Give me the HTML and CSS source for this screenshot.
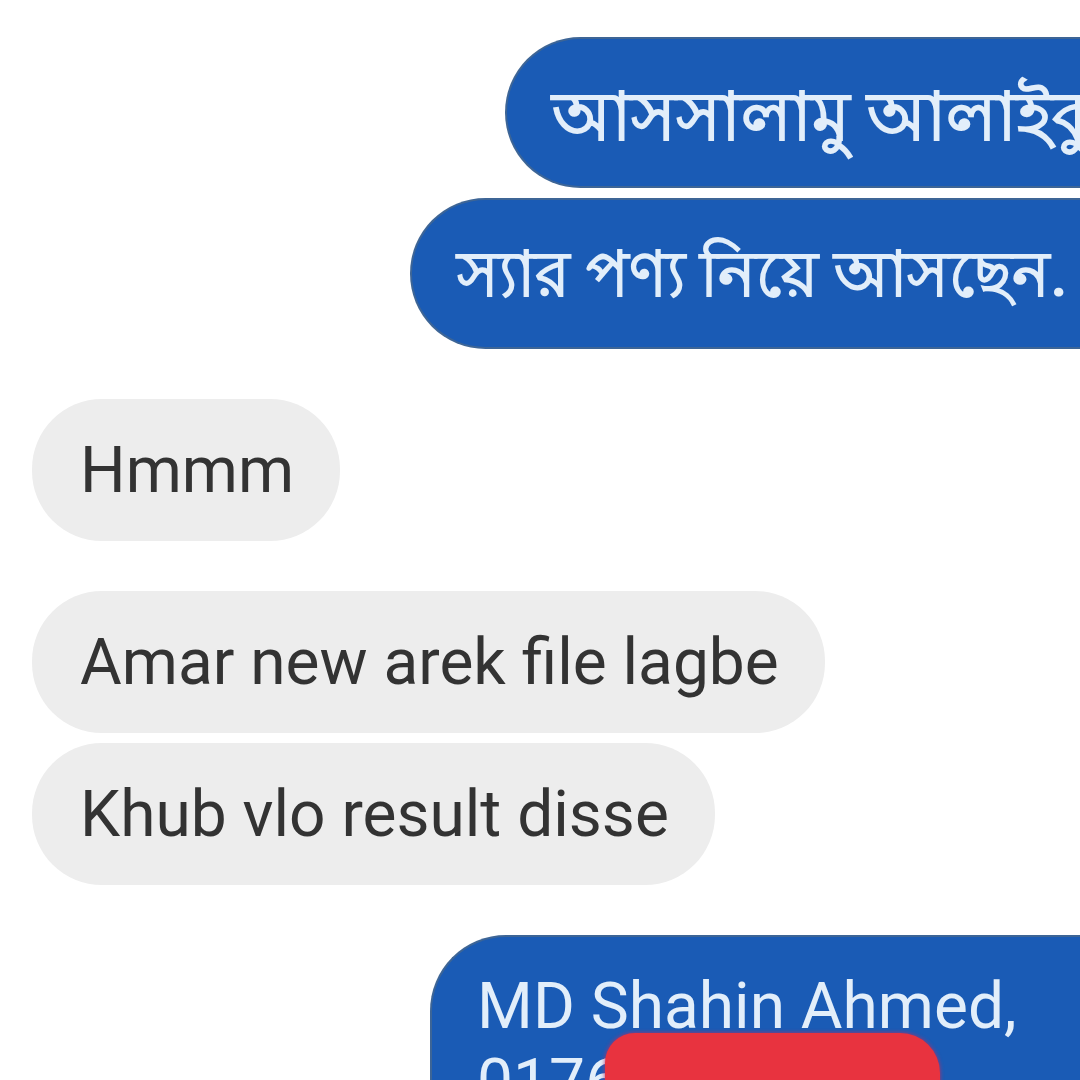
FILE: index.html
```html
<!DOCTYPE html>
<html lang="bn">
<head>
    <meta charset="UTF-8">
    <meta name="viewport" content="width=device-width, initial-scale=1.0">
    <title>Chat</title>
    <link rel="stylesheet" href="styles.css">
</head>
<body>
    <main class="chat">
        <div class="row sent">
            <div class="bubble out salam">আসসালামু আলাইকুম</div>
        </div>
        <div class="row sent tight">
            <div class="bubble out product">স্যার পণ্য নিয়ে আসছেন.</div>
        </div>

        <div class="row received gap">
            <div class="bubble in">Hmmm</div>
        </div>
        <div class="row received gap">
            <div class="bubble in">Amar new arek file lagbe</div>
        </div>
        <div class="row received tight">
            <div class="bubble in">Khub vlo result disse</div>
        </div>

        <div class="row sent gap">
            <div class="bubble out contact">
                <span class="line">MD Shahin Ahmed,</span>
                <span class="line phone">0176<span class="scribble"></span></span>
            </div>
        </div>
    </main>
</body>
</html>
```

FILE: styles.css
```css
/* styles.css */

body {
    margin: 0;
    padding: 0;
    background-color: #fff;
    font-family: Roboto, "Noto Sans", sans-serif;
    overflow: hidden;
}

.chat {
    width: 1080px;
    height: 1080px;
    overflow: hidden;
    padding-top: 37px;
    box-sizing: border-box;
}

.row {
    display: flex;
}

.row.gap {
    margin-top: 50px;
}

.row.tight {
    margin-top: 10px;
}

.bubble {
    white-space: nowrap;
    box-sizing: border-box;
}

/* outgoing, blue, runs off the right edge */
.bubble.out {
    flex: 1;
    overflow: hidden;
    background-color: #1a5bb5;
    color: #e2eefa;
    border: 2px solid #3d6596;
    border-right: none;
    border-radius: 76px 0 0 76px;
    height: 151px;
    display: flex;
    align-items: center;
    padding-left: 45px;
    padding-top: 16px;
    font-size: 66px;
    font-weight: 600;
}

.bubble.salam {
    margin-left: 505px;
    font-size: 68px;
}

.bubble.product {
    margin-left: 410px;
    font-size: 63px;
    padding-top: 10px;
}

.bubble.contact {
    margin-left: 430px;
    height: 300px;
    flex-direction: column;
    align-items: flex-start;
    justify-content: flex-start;
    padding-top: 32px;
    font-size: 64px;
    font-weight: 400;
    border-radius: 76px 0 0 0;
}

.line {
    display: block;
    line-height: 76px;
    position: relative;
}

.scribble {
    position: absolute;
    left: 128px;
    top: -12px;
    width: 335px;
    height: 120px;
    background-color: #e8333f;
    border-radius: 30px 40px 0 0;
    box-shadow: 0 0 4px #b2306a;
}

/* incoming, grey */
.bubble.in {
    margin-left: 32px;
    background-color: #ededed;
    color: #333;
    border-radius: 70px;
    height: 142px;
    display: flex;
    align-items: center;
    padding: 0 46px 0 48px;
    font-size: 64px;
}
```
